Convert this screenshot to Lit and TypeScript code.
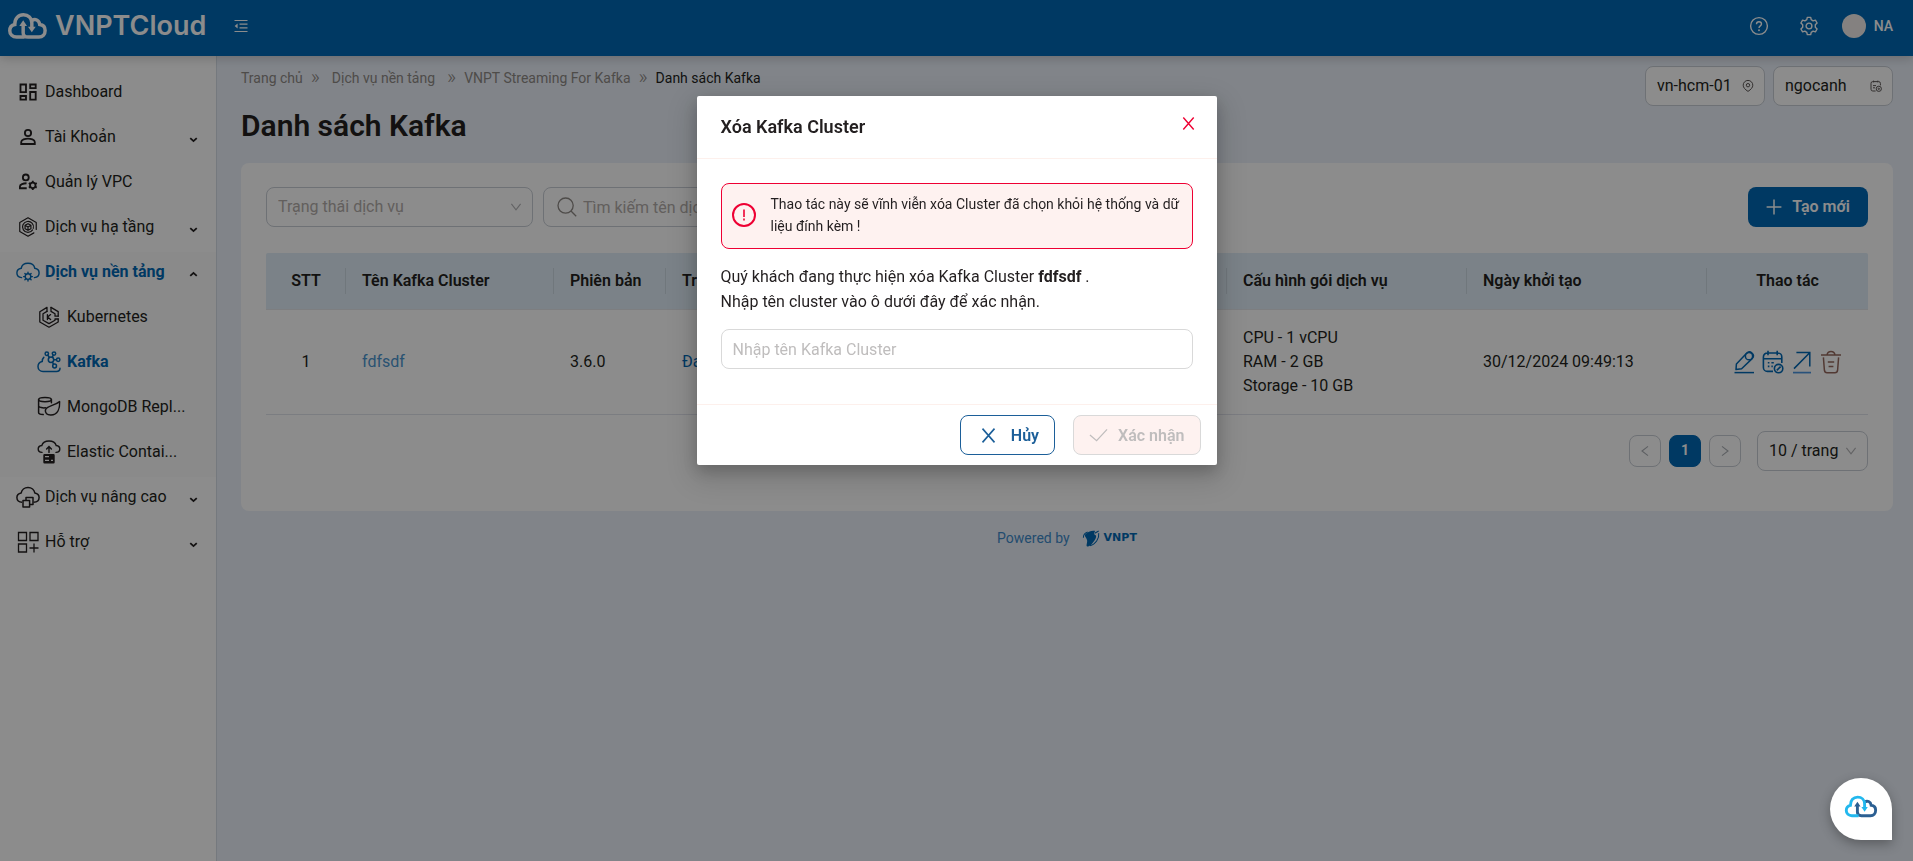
import { LitElement, html, css, svg, nothing, TemplateResult, SVGTemplateResult } from "lit";
import { customElement, property, state } from "lit/decorators.js";
import { classMap } from "lit/directives/class-map.js";

type Glyph = { box: string; body: SVGTemplateResult };

/* Stroke icons; every glyph inherits its colour from the surrounding text. */
const GLYPHS: Record<string, Glyph> = {
  dashboard: {
    box: "0 0 24 24",
    body: svg`<g fill="none" stroke="currentColor" stroke-width="2" stroke-linejoin="miter">
      <path d="M3.800 3.800h6v8.400h-6zM14.400 3.800h6v4h-6zM14.400 12h6v8.400h-6zM3.800 16.400h6v4h-6z"/></g>`,
  },
  user: {
    box: "0 0 24 24",
    body: svg`<g fill="none" stroke="currentColor" stroke-width="2">
      <circle cx="12" cy="7.600" r="3.400"/><path d="M4.600 19.600v-2.200c0-2.400 4.600-3.600 7.400-3.600s7.400 1.200 7.400 3.600v2.200z"/></g>`,
  },
  userGear: {
    box: "0 0 24 24",
    body: svg`<g fill="none" stroke="currentColor" stroke-width="2">
      <circle cx="9.600" cy="7" r="3.200"/><path d="M10.600 18.800H3.200v-2c0-2 3.600-3.400 7.200-3.400"/>
      <circle cx="17.200" cy="15.600" r="3"/>
      <path d="M17.200 10.600v2M17.200 18.600v2M12.900 13.100l1.700 1M19.800 17.100l1.700 1M12.900 18.100l1.700-1M19.800 14.100l1.700-1"/></g>`,
  },
  cube: {
    box: "0 0 24 24",
    body: svg`<g fill="none" stroke="currentColor" stroke-width="1.300" stroke-linejoin="round" stroke-linecap="round">
      <path d="M21 14.600V7.200L12 2 3 7.200v9.600L12 22l6.400-3.600"/><path d="M17 15.200a6 6 0 1 1 .800-1.800"/>
      <path d="M12 8.400l3.200 1.800v3.600L12 15.600l-3.200-1.800v-3.600zM8.800 10.200L12 12l3.200-1.800M12 12v3.600"/></g>`,
  },
  cloudGear: {
    box: "0 0 24 24",
    body: svg`<g fill="none" stroke="currentColor" stroke-width="1.400" stroke-linecap="round">
      <path d="M5.600 17.600C2.800 17.200.9 15.600.9 12.900c0-2.300 1.600-4.100 4.300-4.600C5.700 5.400 8.400 3.300 12 3.300s6.300 2.100 6.800 5c2.700.5 4.300 2.300 4.300 4.600 0 2.700-1.900 4.300-4.700 4.700"/>
      <circle cx="12" cy="16.600" r="2.800"/>
      <path d="M12 12.200v1.200M12 19.800v1.200M7.600 16.600h1.200M15.200 16.600h1.200M8.900 13.500l.9.9M14.200 18.800l.9.9M8.900 19.700l.9-.9M14.200 14.400l.9-.9"/></g>`,
  },
  kube: {
    box: "0 0 24 24",
    body: svg`<g fill="none" stroke="currentColor" stroke-width="1.300" stroke-linejoin="round" stroke-linecap="round">
      <path d="M14 2.400L21.200 6.600v4.600M21.200 14v3L12 22.200 2.800 17V6.800L10 2.400v4"/>
      <path d="M14 2.400v4l4 2.400v2.400h3.200M18 14v1.200l-6 3.400-6-3.400V8.800l4-2.400M21.200 14H18"/>
      <path d="M10.400 9.600v5M13.600 9.600l-3 2.500 3 2.500"/></g>`,
  },
  kafka: {
    box: "0 0 24 24",
    body: svg`<g fill="none" stroke="currentColor" stroke-width="1.500" stroke-linecap="round">
      <path d="M6.800 7.400C5.600 8.600 5.200 10 5.200 11.400 2.600 12 1 13.800 1 16.400c0 3 2.200 5 5 5h13.400c2 0 3.600-1.200 3.600-3.200"/>
      <circle cx="14" cy="9.800" r="2.700"/><circle cx="9.800" cy="3.800" r="1.700"/><circle cx="17" cy="3.600" r="1.700"/>
      <circle cx="21.200" cy="9.800" r="1.700"/><circle cx="17.600" cy="16" r="1.900"/>
      <path d="M10.800 5.200l1.600 2.300M16.200 5.200l-1 2.200M16.800 9.800h2.600M15.400 12.200l1.200 2.200"/></g>`,
  },
  mongo: {
    box: "0 0 24 24",
    body: svg`<g fill="none" stroke="currentColor" stroke-width="1.500" stroke-linejoin="round" stroke-linecap="round">
      <ellipse cx="8" cy="4.600" rx="6.400" ry="2.200"/><path d="M1.600 4.600v12.800c0 1.200 2 2 4.600 2.200M14.400 4.600v3.200M1.600 11c.6 1.400 4 2.200 6.800 1.800"/>
      <path d="M22.600 6.600c.4 7-2 13-8.600 13.400-4 .2-6-2-5.600-4.800.6-4.600 8.200-3.800 14.200-8.600z"/></g>`,
  },
  elastic: {
    box: "0 0 24 24",
    body: svg`<g fill="none" stroke="currentColor" stroke-width="1.400" stroke-linecap="round">
      <path d="M5 12.400C2.600 12.200 1.200 10.900 1.200 9c0-1.900 1.500-3.200 3.600-3.500C5.600 2.800 8.400 1 12 1s6.400 1.800 7.200 4.500c2.100.3 3.600 1.600 3.600 3.500 0 1.900-1.400 3.200-3.800 3.400"/>
      <path d="M12 12.400V7M9.600 9L12 6.600 14.400 9"/></g>
      <path fill="currentColor" fill-rule="evenodd" d="M7.500 14h9a1.200 1.200 0 0 1 1.200 1.200v7a1.200 1.200 0 0 1-1.200 1.200h-9a1.200 1.200 0 0 1-1.200-1.200v-7A1.200 1.200 0 0 1 7.500 14zm.5 2v1.200h4V16zm0 3.800V21h4v-1.200zm6 0V21h2v-1.200z"/>`,
  },
  cloudBox: {
    box: "0 0 24 24",
    body: svg`<g fill="none" stroke="currentColor" stroke-width="1.500" stroke-linejoin="round">
      <path d="M6 17.200C2.800 17.200.9 15.400.9 12.500c0-2.300 1.600-4.100 4.300-4.600C5.700 4.900 8.400 2.400 12 2.400s6.300 2.500 6.800 5.500c2.700.5 4.300 2.300 4.300 4.600 0 2.900-2.100 4.700-5.500 4.700"/>
      <path d="M7 15.600h6.600v6.400H7zM10 15.200V12.600h7v7h-3"/></g>`,
  },
  gridPlus: {
    box: "0 0 24 24",
    body: svg`<g fill="none" stroke="currentColor" stroke-width="1.300">
      <path d="M2.500 2.500h8v8h-8zM14 2.500h8v8h-8zM2.500 14h8v8h-8zM18 13.600v9M13.500 18h9"/></g>`,
  },
  caret: {
    box: "0 0 10 10",
    body: svg`<path d="M1.400 3.400L5 6.800l3.600-3.400" fill="none" stroke="currentColor" stroke-width="2"/>`,
  },
  fold: {
    box: "0 0 14 14",
    body: svg`<path d="M.5 1.500h13M5.500 5.200h8M5.500 8.800h8M.5 12.500h13" fill="none" stroke="currentColor" stroke-width="1.200"/>
      <path d="M.6 7l3-2.400v4.800z" fill="currentColor"/>`,
  },
  help: {
    box: "0 0 20 20",
    body: svg`<g fill="none" stroke="currentColor" stroke-width="1.400"><circle cx="10" cy="10" r="8.400"/>
      <path d="M7.500 8.200c0-1.500 1.100-2.400 2.500-2.400s2.500.9 2.500 2.200c0 1.800-2.500 1.900-2.500 3.900"/></g>
      <circle cx="10" cy="14.200" r=".95" fill="currentColor"/>`,
  },
  gear: {
    box: "0 0 20 20",
    body: svg`<g fill="none" stroke="currentColor" stroke-width="1.400" stroke-linejoin="round"><circle cx="10" cy="10" r="2.900"/>
      <path d="M8.300 1.400h3.400l.5 2.300 1.900 1.100 2.300-.7 1.700 2.900-1.800 1.700v2.600l1.800 1.700-1.700 2.900-2.300-.7-1.900 1.100-.5 2.300H8.300l-.5-2.300-1.900-1.100-2.300.7-1.700-2.900 1.800-1.700V8.700L1.900 7l1.700-2.900 2.300.7 1.900-1.100z"/></g>`,
  },
  pin: {
    box: "0 0 12 12",
    body: svg`<g fill="none" stroke="currentColor" stroke-width="1"><path d="M6 11.400C3 9.400 1.200 7.600 1.200 5.200a4.800 4.800 0 0 1 9.600 0c0 2.400-1.800 4.200-4.800 6.200z"/>
      <circle cx="6" cy="5.200" r="1.700"/></g>`,
  },
  project: {
    box: "0 0 12 12",
    body: svg`<g fill="none" stroke="currentColor" stroke-width="1"><path d="M5.600 11H2.800A1.800 1.800 0 0 1 1 9.200V3.400a1.800 1.800 0 0 1 1.800-1.800h5.800a1.800 1.800 0 0 1 1.800 1.800v2M3.600.6v1.800M7.800.6v1.800M3 5.600h3M3 7.800h2"/>
      <circle cx="8.800" cy="8.800" r="2.600"/><circle cx="8.800" cy="8.800" r=".7"/></g>`,
  },
  down: {
    box: "0 0 12 12",
    body: svg`<path d="M1.400 2.800L6 8.800l4.600-6" fill="none" stroke="currentColor" stroke-width="1.100"/>`,
  },
  search: {
    box: "0 0 20 20",
    body: svg`<g fill="none" stroke="currentColor" stroke-width="1.300"><circle cx="8.600" cy="8.600" r="7.600"/><path d="M14 14l5.200 5.200"/></g>`,
  },
  plus: {
    box: "0 0 16 16",
    body: svg`<path d="M8 .6v14.800M.6 8h14.800" fill="none" stroke="currentColor" stroke-width="1.500"/>`,
  },
  edit: {
    box: "0 0 22 24",
    body: svg`<g fill="none" stroke="currentColor" stroke-width="1.500" stroke-linejoin="round">
      <path d="M3 19.600l.4-5.600L13.600 3.200a3.900 3.900 0 0 1 5.800 5.200L8.600 18.800z"/><circle cx="16" cy="6.200" r="3.600"/><path d="M1.500 22.600h19.500"/></g>`,
  },
  calendar: {
    box: "0 0 22 24",
    body: svg`<g fill="none" stroke="currentColor" stroke-width="1.600">
      <path d="M11 21.400H5.400a4 4 0 0 1-4-4V7a4 4 0 0 1 4-4h10.400a4 4 0 0 1 4 4v6M1.400 8.800h18.400M6 .8v4.400M15.200 .8v4.400"/>
      <circle cx="16.600" cy="18.600" r="4.200"/><path d="M14.800 20.400l3.800-3.800"/></g>
      <path fill="currentColor" d="M5.800 12h1.600v1.600H5.800zM5.800 15.600h1.600v1.600H5.800zM9.400 15.600h1.400v1.600H9.400zM9.400 12h2.400v1.600H9.400z"/>`,
  },
  open: {
    box: "0 0 22 24",
    body: svg`<path d="M3 18.600L18.200 3.200M5.400 2.600h13.400v14" fill="none" stroke="currentColor" stroke-width="1.500"/>
      <path d="M2 22.600h18" stroke="#4c96e0" stroke-width="1.700"/>`,
  },
  trash: {
    box: "0 0 22 24",
    body: svg`<g fill="none" stroke="currentColor" stroke-width="1.500">
      <path d="M1 5h20M7 4.800c.4-2.200 1.600-3.400 4-3.400s3.600 1.200 4 3.400M3.400 7.400l1 12.800c.2 1.600 1 2.600 2.600 2.600h8c1.600 0 2.400-1 2.600-2.600l1-12.800M7.800 12h6.400M8.600 16.600h4.800"/></g>`,
  },
  prev: {
    box: "0 0 12 12",
    body: svg`<path d="M9 1.400L3 6l6 4.600" fill="none" stroke="currentColor" stroke-width="1.100"/>`,
  },
  next: {
    box: "0 0 12 12",
    body: svg`<path d="M3 1.400L9 6l-6 4.600" fill="none" stroke="currentColor" stroke-width="1.100"/>`,
  },
  close: {
    box: "0 0 14 14",
    body: svg`<path d="M1.400 .6l11.200 12.800M12.600 .6L1.400 13.400" fill="none" stroke="currentColor" stroke-width="1.500"/>`,
  },
  check: {
    box: "0 0 20 14",
    body: svg`<path d="M1 7l7 6L19 1" fill="none" stroke="currentColor" stroke-width="1.300"/>`,
  },
  alert: {
    box: "0 0 24 24",
    body: svg`<circle cx="12" cy="12" r="11" fill="none" stroke="currentColor" stroke-width="2"/>
      <path d="M12 6.500v7.500M12 15.600v2" stroke="currentColor" stroke-width="1.600"/>`,
  },
};

const glyph = (name: string, w: number, h: number = w, cls = "") =>
  html`<svg class=${"glyph " + cls} width=${w} height=${h} viewBox=${GLYPHS[name].box} aria-hidden="true">${GLYPHS[name].body}</svg>`;

/* Cloud mark: two interlocking halves with up and down arrows. */
const cloudMark = (w: number, h: number, left: string, right: string) => html`
  <svg class="glyph" width=${w} height=${h} viewBox="0 0 40 27" aria-hidden="true">
    <g fill="none" stroke-width="3.600" stroke-linecap="butt">
      <path stroke=${right} d="M24.500 8c3.200-2.400 7.600-.8 8.200 4 3.400.4 5.600 2.800 5.600 6.200 0 4-2.600 6.800-6.400 6.800H20.500c-3.600 0-5-1.800-5-4.600V12"/>
      <path stroke=${left} d="M17 25H8.600c-4 0-7-2.600-7-6.600 0-3.400 2.200-5.800 5.200-6.400C6.600 5.600 10.600 1.800 15.800 1.800c5 0 8.700 3.400 8.700 8.400V15"/>
    </g>
    <path fill=${right} d="M15.500 7.600l4 5.800h-8z"/><path fill=${left} d="M24.500 20l-4-5.800h8z"/>
  </svg>`;

const baseStyles = css`
  :host { display: block; box-sizing: border-box; }
  *, *::before, *::after { box-sizing: border-box; }
  .glyph { display: block; flex: none; overflow: visible; }
  button, input, select { font: inherit; color: inherit; margin: 0; }
  button { cursor: pointer; }
  a { color: inherit; text-decoration: none; }
`;

@customElement("app-header")
class AppHeader extends LitElement {
  static styles = [baseStyles, css`
    :host { position: relative; z-index: 1; }
    .bar { height: 56px; display: flex; align-items: center; padding: 0 20px 4px 8px; background: #0068b4; color: #fff;
      box-shadow: 0 2px 10px rgba(0, 0, 0, 0.2); }
    .brand { display: flex; align-items: center; gap: 8px; font: 600 27px/32px Inter, sans-serif; }
    .icon { border: 0; background: none; padding: 0; display: block; color: #fff; }
    .fold { margin-left: 28px; }
    .tools { margin-left: auto; display: flex; align-items: center; }
    .gear { margin-left: 30px; }
    .user { display: flex; align-items: center; gap: 8px; margin-left: 23px; padding: 0; border: 0; background: none; color: #fff;
      font-size: 14px; line-height: 24px; font-weight: 500; }
    .avatar { width: 24px; height: 24px; border-radius: 50%; background: #f0ece9; }
  `];
  render() {
    return html`<header class="bar">
      <a class="brand" href="#">${cloudMark(39, 26, "#fff", "#fff")}<span>VNPTCloud</span></a>
      <button class="icon fold" aria-label="Menu">${glyph("fold", 14)}</button>
      <div class="tools">
        <button class="icon" aria-label="Help">${glyph("help", 20)}</button>
        <button class="icon gear" aria-label="Settings">${glyph("gear", 20)}</button>
        <button class="user"><span class="avatar"></span>NA</button>
      </div>
    </header>`;
  }
}

type Item = { label: string; icon: string; fold?: "up" | "down"; active?: boolean; children?: Item[] };

const MENU: Item[] = [
  { label: "Dashboard", icon: "dashboard" },
  { label: "Tài Khoản", icon: "user", fold: "down" },
  { label: "Quản lý VPC", icon: "userGear" },
  { label: "Dịch vụ hạ tầng", icon: "cube", fold: "down" },
  {
    label: "Dịch vụ nền tảng", icon: "cloudGear", fold: "up", active: true,
    children: [
      { label: "Kubernetes", icon: "kube" },
      { label: "Kafka", icon: "kafka", active: true },
      { label: "MongoDB Repl...", icon: "mongo" },
      { label: "Elastic Contai...", icon: "elastic" },
    ],
  },
  { label: "Dịch vụ nâng cao", icon: "cloudBox", fold: "down" },
  { label: "Hỗ trợ", icon: "gridPlus", fold: "down" },
];

@customElement("app-menu")
class AppMenu extends LitElement {
  static styles = [baseStyles, css`
    :host { background: #fff; border-right: 1px solid #d5dde6; padding-top: 16px; }
    .row { display: flex; align-items: center; gap: 5px; height: 45px; padding: 0 18px 5px 16px; font-size: 16px; line-height: 24px; color: #231f20; white-space: nowrap; }
    .child { padding-left: 37px; gap: 6px; }
    .icon { width: 24px; display: flex; justify-content: center; }
    .active { color: #0068b4; font-weight: 700; }
    .group { background: #fbfbfb; }
    .fold { margin: 5px 0 0 auto; color: #231f20; }
    .up { transform: rotate(180deg); }
  `];
  private row(item: Item, child = false): TemplateResult {
    const small = ["dashboard", "user", "userGear", "cube"].includes(item.icon);
    return html`<a href="#" class=${classMap({ row: true, child, active: !!item.active })}>
        <span class="icon">${glyph(item.icon, small ? 22 : 24)}</span>
        <span>${item.label}</span>
        ${item.fold ? glyph("caret", 9, 9, "fold " + item.fold) : nothing}
      </a>`;
  }
  render() {
    return html`<nav>
      ${MENU.map((item) => item.children
        ? html`<div class="group">${this.row(item)}${item.children.map((c) => this.row(c, true))}</div>`
        : this.row(item))}
    </nav>`;
  }
}

@customElement("cluster-page")
class ClusterPage extends LitElement {
  static styles = [baseStyles, css`
    :host { padding: 10px 20px 24px 24px; font-size: 16px; line-height: 24px; color: #231f20; }
    .top { display: flex; justify-content: space-between; align-items: flex-start; }
    .crumbs { display: flex; gap: 8px; margin: 0; padding: 0; list-style: none; font-size: 14px; line-height: 24px; color: #8f8a86; }
    .crumbs .menu { padding: 0 4px; }
    .crumbs .here { color: #231f20; }
    .crumbs .sep { font-size: 20px; line-height: 22px; font-weight: 300; }
    h1 { margin: 2px 0 0; font-size: 30px; line-height: 36px; font-weight: 600; }
    .filters { display: flex; gap: 8px; }
    .field { position: relative; display: block; height: 40px; }
    .field select, .field input { width: 100%; height: 100%; appearance: none; border: 1px solid #c9ced6; border-radius: 8px; background: #fff; padding: 0 11px; outline: 0; display: block; }
    .field .glyph { position: absolute; right: 11px; top: 14px; color: #b3b3b6; pointer-events: none; }
    .filters .field { width: 120px; }
    .filters .glyph { color: #5c5655; }
    .card { background: #fff; border-radius: 8px; margin-top: 19px; padding: 24px 25px 40px; }
    .tools { display: flex; gap: 10px; }
    .tools .status { width: 267px; }
    .tools .find { width: 267px; }
    .status select { color: #b3adaa; }
    .find input { padding-left: 39px; }
    .find input::placeholder { color: #b3adaa; opacity: 1; }
    .find .glyph { left: 14px; right: auto; top: 10px; color: #8f8a86; }
    .create { margin-left: auto; width: 120px; height: 40px; display: flex; align-items: center; justify-content: center; gap: 10px; border: 0; border-radius: 8px; background: #0068b4; color: #fff; font-weight: 600; }
    table { width: 100%; margin-top: 26px; border-collapse: separate; border-spacing: 0; table-layout: fixed; }
    .c-no { width: 80px; } .c-name { width: 208px; } .c-ver { width: 112px; } .c-plan, .c-date { width: 240px; } .c-act { width: 161px; }
    th { position: relative; background: #e0edf7; text-align: left; font-weight: 600; padding: 16px; height: 56px; white-space: nowrap; border-bottom: 1px solid #e4e6ea; }
    th:not(:last-child)::after { content: ""; position: absolute; right: 0; top: 15px; width: 1px; height: 26px; background: #cdd9e2; }
    th:first-child { border-radius: 2px 0 0 0; }
    th:last-child { border-radius: 0 2px 0 0; }
    td { padding: 16px; height: 105px; border-bottom: 1px solid #e1e3ec; }
    .mid { text-align: center; }
    .link { color: #4c96d0; }
    .state { color: #0068b4; }
    .actions { display: flex; justify-content: center; gap: 7px; }
    .actions button { padding: 0; border: 0; background: none; color: #0068b4; display: block; }
    .actions .remove { color: #96695e; }
    .pager { display: flex; align-items: center; justify-content: flex-end; gap: 8px; margin-top: 16px; }
    .page { width: 32px; height: 32px; padding: 0; display: grid; place-items: center; border: 1px solid #c9ced6; border-radius: 8px; background: #fff; color: #a9adb3; font-size: 14px; line-height: 20px; }
    .current { background: #0068b4; border-color: #0068b4; color: #fff; font-weight: 700; padding-bottom: 2px; }
    .size { width: 111px; margin-left: 8px; }
    .powered { display: flex; align-items: center; justify-content: center; gap: 13px; margin-top: 15px; font-size: 14px; line-height: 24px; color: #3f8bca; }
    .vnpt { display: flex; align-items: center; gap: 4px; color: #0068b4; font: 700 11px/16px "DejaVu Sans", sans-serif; }
  `];
  render() {
    return html`
      <div class="top">
        <ol class="crumbs">
          <li><a href="#">Trang chủ</a></li><li class="sep" aria-hidden="true">»</li>
          <li class="menu"><a href="#">Dịch vụ nền tảng</a></li><li class="sep" aria-hidden="true">»</li>
          <li><a href="#">VNPT Streaming For Kafka</a></li><li class="sep" aria-hidden="true">»</li>
          <li class="here">Danh sách Kafka</li>
        </ol>
        <div class="filters">
          <label class="field"><select aria-label="Region"><option>vn-hcm-01</option></select>${glyph("pin", 12)}</label>
          <label class="field"><select aria-label="Project"><option>ngocanh</option></select>${glyph("project", 12)}</label>
        </div>
      </div>
      <h1>Danh sách Kafka</h1>
      <section class="card">
        <div class="tools">
          <label class="field status"><select aria-label="Status"><option>Trạng thái dịch vụ</option></select>${glyph("down", 12)}</label>
          <label class="field find"><input type="search" aria-label="Search" placeholder="Tìm kiếm tên dịch vụ" />${glyph("search", 20)}</label>
          <button class="create">${glyph("plus", 16)}Tạo mới</button>
        </div>
        <table>
          <colgroup><col class="c-no" /><col class="c-name" /><col class="c-ver" /><col /><col class="c-plan" /><col class="c-date" /><col class="c-act" /></colgroup>
          <thead><tr><th class="mid">STT</th><th>Tên Kafka Cluster</th><th>Phiên bản</th><th>Trạng thái</th><th>Cấu hình gói dịch vụ</th><th>Ngày khởi tạo</th><th class="mid">Thao tác</th></tr></thead>
          <tbody><tr>
            <td class="mid">1</td><td><a class="link" href="#">fdfsdf</a></td><td>3.6.0</td><td class="state">Đang hoạt động</td>
            <td>CPU - 1 vCPU<br />RAM - 2 GB<br />Storage - 10 GB</td><td>30/12/2024 09:49:13</td>
            <td><div class="actions">
              <button aria-label="Edit">${glyph("edit", 22, 24)}</button>
              <button aria-label="Schedule">${glyph("calendar", 22, 24)}</button>
              <button aria-label="Open">${glyph("open", 22, 24)}</button>
              <button class="remove" aria-label="Delete">${glyph("trash", 22, 24)}</button>
            </div></td>
          </tr></tbody>
        </table>
        <div class="pager">
          <button class="page" aria-label="Previous">${glyph("prev", 12)}</button>
          <button class="page current">1</button>
          <button class="page" aria-label="Next">${glyph("next", 12)}</button>
          <label class="field size"><select aria-label="Page size"><option>10 / trang</option></select>${glyph("down", 12)}</label>
        </div>
      </section>
      <footer class="powered"><span>Powered by</span>
        <span class="vnpt"><svg class="glyph" width="17" height="17" viewBox="0 0 18 18" aria-hidden="true">
          <path fill="currentColor" d="M2 5C5 1.400 9.600.4 13 1c-2 2-1 4 .4 4.600C15 7 12.600 11 10 14c-1.600 2-3.600 3.600-5.400 3.400C2.800 17 4.600 14 4.400 11 4.200 8.600 1.600 7.400 2 5z"/>
          <path fill="none" stroke="currentColor" stroke-width="1.100" d="M7.400 16.600C13 15.400 17.600 9 16.600 3.400M12.400 3.400L16.600 1M.4 8.200C.4 5.400 2.400 3 5 2.200"/></svg>VNPT</span>
      </footer>`;
  }
}

@customElement("delete-dialog")
class DeleteDialog extends LitElement {
  @property() cluster = "fdfsdf";
  @state() private typed = "";
  static styles = [baseStyles, css`
    :host { position: fixed; inset: 0; z-index: 10; display: flex; justify-content: center; align-items: flex-start; padding-top: 96px; background: rgba(0, 0, 0, 0.45); font-size: 16px; line-height: 25px; color: #231f20; }
    .box { width: 520px; max-width: 100%; background: #fff; border-radius: 2px; box-shadow: 0 6px 16px rgba(0, 0, 0, 0.2), 0 10px 30px 8px rgba(0, 0, 0, 0.12); }
    header { display: flex; justify-content: space-between; padding: 18px 22px 19px 24px; border-bottom: 1px solid #fdf0ec; }
    h2 { margin: 0; font-size: 18px; line-height: 25px; font-weight: 600; }
    .x { align-self: flex-start; padding: 3px 0 0; border: 0; background: none; color: #ee0033; display: block; }
    .body { padding: 24px 24px 35px; }
    .alert { display: flex; align-items: center; gap: 15px; border: 1px solid #ee0033; border-radius: 8px; background: #fef2f0; padding: 9px 10px 11px; font-size: 14px; line-height: 22px; }
    .alert .glyph { color: #ee0033; }
    .alert p { margin: 0; }
    .ask { display: block; margin: 15px 0; }
    .name { width: 100%; height: 40px; display: block; border: 1px solid #d9d9d9; border-radius: 8px; padding: 0 11px; outline: 0; background: #fff; }
    .name::placeholder { color: #bfbdbd; opacity: 1; }
    footer { display: flex; justify-content: flex-end; gap: 18px; padding: 10px 16px; border-top: 1px solid #fdf0ec; }
    .btn { height: 40px; display: flex; align-items: center; border-radius: 8px; border: 1px solid #1c5f99; background: #fff; color: #1c5f99; font-weight: 600; }
    .cancel { gap: 15px; padding: 0 15px 0 20px; }
    .ok { gap: 10px; padding: 0 15px; }
    .ok:disabled { background: #fef2f0; border-color: #d9d9d9; color: #bfbdbd; }
  `];
  render() {
    return html`<div class="box" role="dialog" aria-modal="true" aria-labelledby="title">
      <header><h2 id="title">Xóa Kafka Cluster</h2><button class="x" aria-label="Close">${glyph("close", 13)}</button></header>
      <div class="body">
        <div class="alert" role="alert">${glyph("alert", 24)}<p>Thao tác này sẽ vĩnh viễn xóa Cluster đã chọn khỏi hệ thống và dữ liệu đính kèm !</p></div>
        <label class="ask" for="name">Quý khách đang thực hiện xóa Kafka Cluster <b>${this.cluster}</b> .<br />Nhập tên cluster vào ô dưới đây để xác nhận.</label>
        <input id="name" class="name" placeholder="Nhập tên Kafka Cluster" .value=${this.typed}
          @input=${(e: Event) => (this.typed = (e.target as HTMLInputElement).value)} />
      </div>
      <footer>
        <button class="btn cancel">${glyph("close", 15)}Hủy</button>
        <button class="btn ok" ?disabled=${this.typed !== this.cluster}>${glyph("check", 19, 14)}Xác nhận</button>
      </footer>
    </div>`;
  }
}

@customElement("app-root")
class AppRoot extends LitElement {
  static styles = [baseStyles, css`
    :host { display: flex; flex-direction: column; min-height: 100vh; background: #ebf1fa; font-family: Roboto, sans-serif; }
    .main { flex: 1; display: grid; grid-template-columns: 217px minmax(0, 1fr); }
    .chat { position: fixed; right: 21px; bottom: 21px; z-index: 11; width: 62px; height: 62px; padding: 0 0 5px; display: grid; place-items: center; border: 0; border-radius: 50% 50% 0 50%; background: #fff; box-shadow: 0 4px 12px rgba(0, 0, 0, 0.3); }
  `];
  render() {
    return html`
      <app-header></app-header>
      <div class="main"><app-menu></app-menu><cluster-page></cluster-page></div>
      <delete-dialog cluster="fdfsdf"></delete-dialog>
      <button class="chat" aria-label="Chat">${cloudMark(32, 23, "#22b8ee", "#2b5f92")}</button>`;
  }
}
